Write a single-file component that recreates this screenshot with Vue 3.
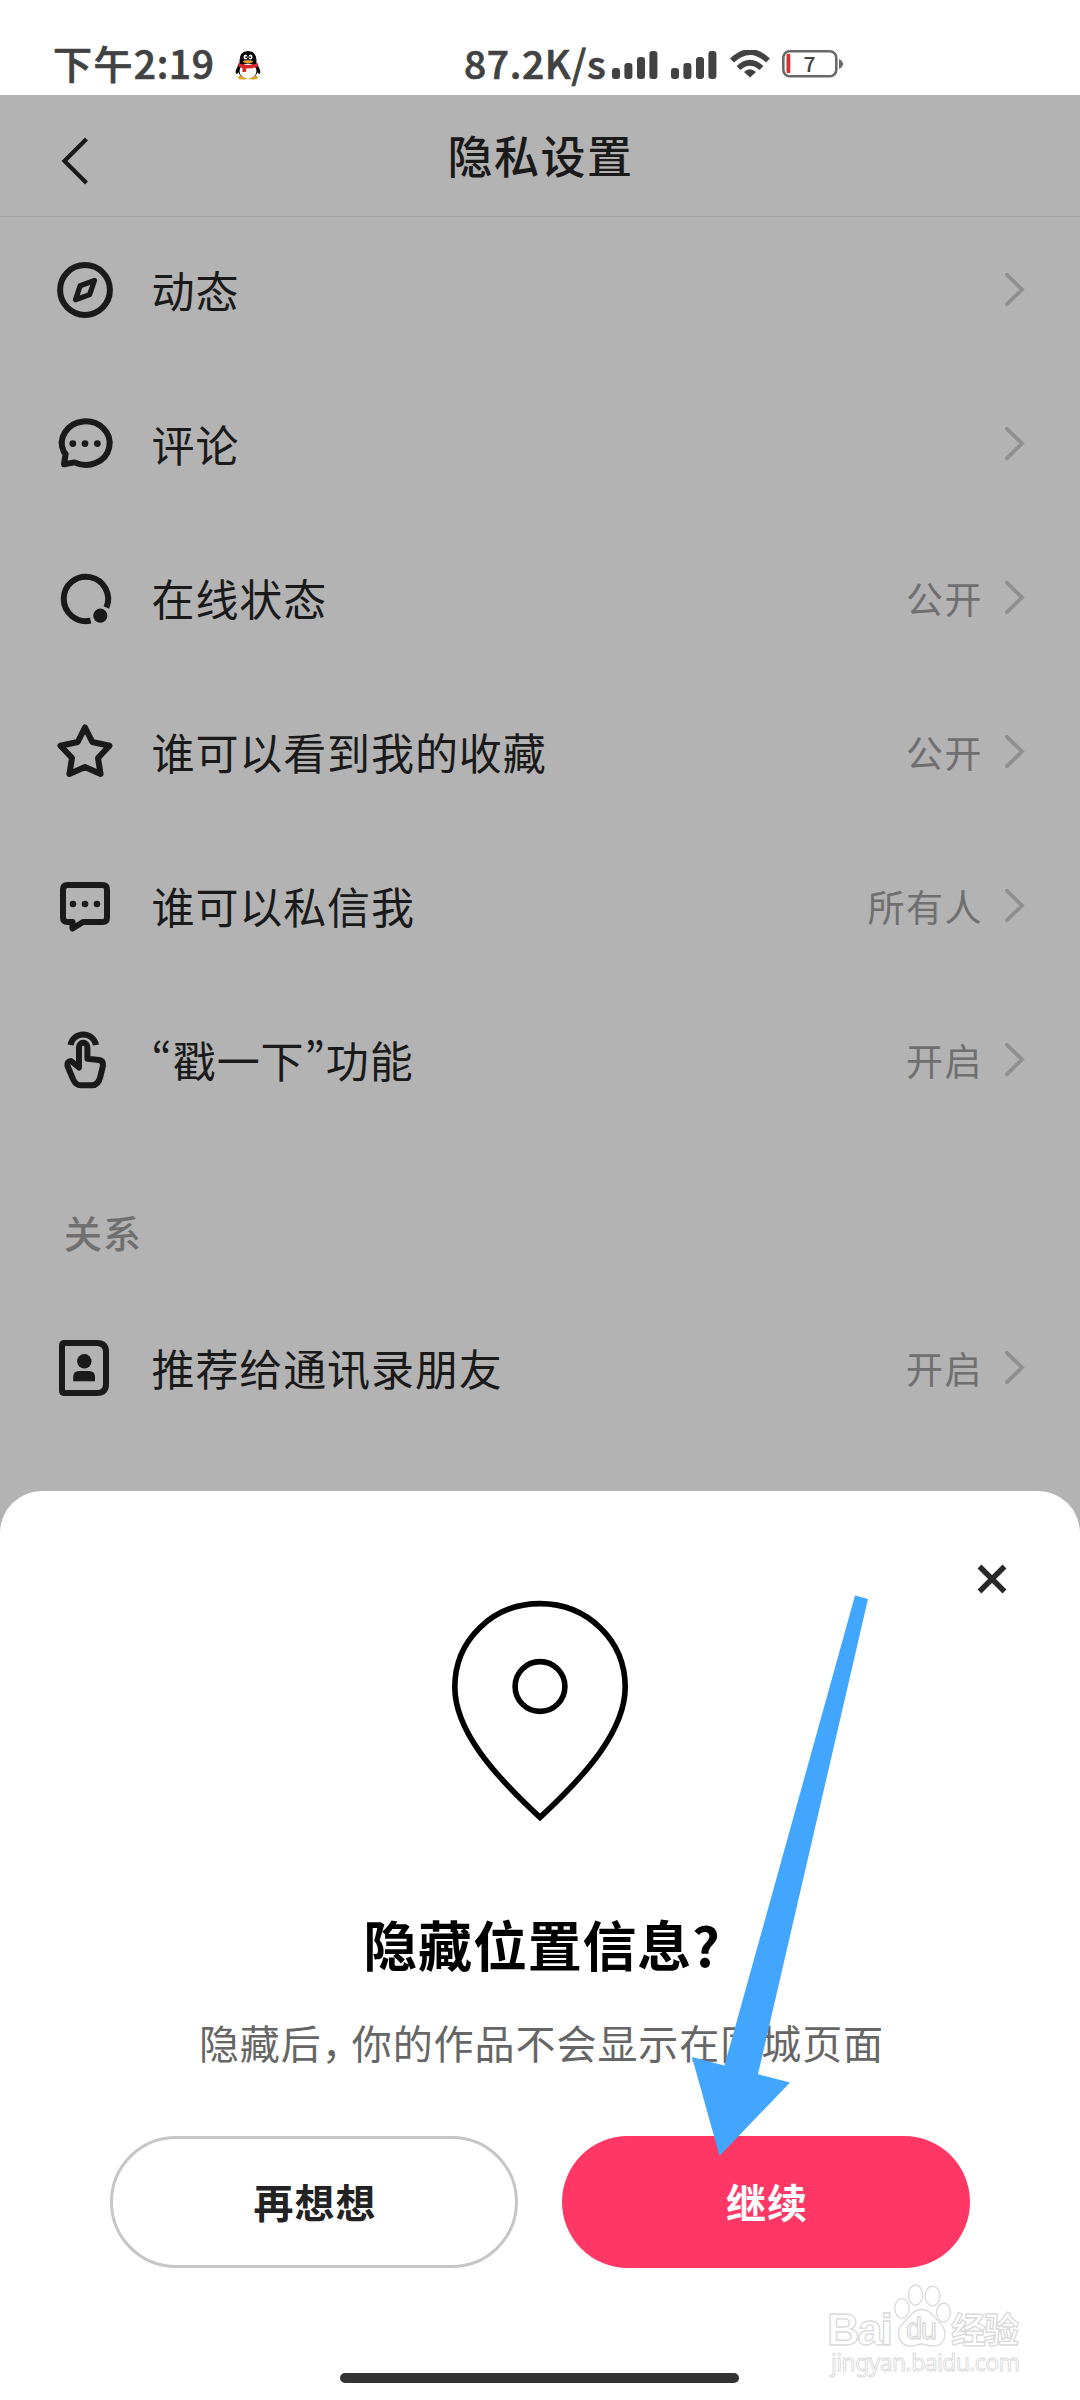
<script setup>
const rows = [
  { icon: 'compass', label: '动态', value: '' },
  { icon: 'comment', label: '评论', value: '' },
  { icon: 'online', label: '在线状态', value: '公开' },
  { icon: 'star', label: '谁可以看到我的收藏', value: '公开' },
  { icon: 'message', label: '谁可以私信我', value: '所有人' },
  { icon: 'poke', label: '“戳一下”功能', value: '开启' },
]
const relationRows = [{ icon: 'contact', label: '推荐给通讯录朋友', value: '开启' }]
const groups = [
  { title: '', items: rows },
  { title: '关系', items: relationRows },
]
</script>

<template>
  <div class="screen">
    <header class="status">
      <span class="time"><span class="cjk">下午</span>2:19</span>
      <svg class="qq" width="26" height="30" viewBox="0 0 26 30">
        <ellipse cx="8" cy="27.5" rx="5" ry="2" fill="#e0a526" />
        <ellipse cx="18" cy="27.5" rx="5" ry="2" fill="#e0a526" />
        <path d="M4 13 L1 20 Q0 24 2 24 L6 20Z M22 13 L25 20 Q26 24 24 24 L20 20Z" fill="#000" />
        <path d="M4.5 13 Q4 1 13 1 Q22 1 21.500 13 L23 20 Q22 28 13 28 Q4 28 3 20Z" fill="#000" />
        <ellipse cx="13" cy="21" rx="8.500" ry="7.500" fill="#fff" />
        <ellipse cx="10.500" cy="7" rx="2" ry="2.600" fill="#fff" />
        <ellipse cx="15.500" cy="7" rx="2" ry="2.600" fill="#fff" />
        <circle cx="11.200" cy="7.200" r="0.900" />
        <circle cx="15" cy="7.200" r="0.900" />
        <ellipse cx="13" cy="11.500" rx="5" ry="1.600" fill="#e8a030" />
        <path d="M3.500 13 Q13 17 22.500 13 L23 16.500 Q17 19 11 18.500 V22 H7.500 V18 L3.500 16.500Z" fill="#d8262a" />
      </svg>
      <span class="speed">87.2K/s</span>
      <svg v-for="n in 2" :key="n" class="signal" width="46" height="30" viewBox="0 0 46 30">
        <g fill="#424242">
          <rect x="0" y="18" width="8" height="11" rx="3" />
          <rect x="12.400" y="13" width="8" height="16" rx="3" />
          <rect x="25" y="7" width="8" height="22" rx="3" />
          <rect x="37.400" y="1" width="8" height="28" rx="3" />
        </g>
      </svg>
      <svg class="wifi" width="40" height="30" viewBox="0 0 40 30">
        <path d="M2 10.500 Q20 -6.500 38 10.500" fill="none" stroke="#424242" stroke-width="5.600" />
        <path d="M8.500 18 Q20 7.500 31.500 18" fill="none" stroke="#424242" stroke-width="5.600" />
        <path d="M14 22 Q20 16.500 26 22 L20 27.500Z" fill="#424242" />
      </svg>
      <svg class="battery" width="62" height="30" viewBox="0 0 62 30">
        <rect x="1.300" y="2.300" width="53" height="25" rx="6.500" fill="none" stroke="#696969" stroke-width="2.600" />
        <rect x="4.500" y="5" width="3.800" height="19" rx="1" fill="#d9302f" />
        <path d="M57 10 Q61 12 61 15 Q61 18 57 20Z" fill="#696969" />
        <text x="27.500" y="23" text-anchor="middle" class="level">7</text>
      </svg>
    </header>

    <main class="page">
      <nav class="navbar">
        <svg class="back" width="30" height="50" viewBox="0 0 30 50">
          <path d="M26.500 3 L4.500 25 L26.500 47" fill="none" stroke="#1a1a1a" stroke-width="4.200" />
        </svg>
        <h1 class="title">隐私设置</h1>
      </nav>

      <section v-for="group in groups" :key="group.title" class="group">
        <h2 v-if="group.title" class="group-title">{{ group.title }}</h2>
        <div v-for="row in group.items" :key="row.label" class="row">
          <svg class="icon" width="60" height="60" viewBox="0 0 60 60">
            <g v-if="row.icon === 'compass'">
              <circle cx="30" cy="30" r="24.900" />
              <path class="mid" d="M39.500 20.500 L25.200 25.700 L20.500 39.700 L34.600 34.600Z" />
            </g>
            <g v-else-if="row.icon === 'comment'">
              <path d="M10.600 40 L8.800 37.800 A23.900 21.800 0 1 1 19.500 48.400 L9 50.300Z" />
              <g class="solid"><circle cx="17.800" cy="29.600" r="3.400" /><circle cx="30" cy="29.600" r="3.400" /><circle cx="42.300" cy="29.600" r="3.400" /></g>
            </g>
            <g v-else-if="row.icon === 'online'">
              <path class="butt" d="M51.400 39.500 A22.200 22.200 0 1 0 35.600 52.600" />
              <circle class="solid" cx="45.300" cy="47.700" r="7.100" />
            </g>
            <path v-else-if="row.icon === 'star'" d="M30 5.500 L37.300 20 L54.500 23.700 L43 36 L45.600 52 L30 45 L14.400 52 L17 36 L5.500 23.700 L22.700 20Z" />
            <g v-else-if="row.icon === 'message'">
              <path d="M12.500 9 H47.500 Q52 9 52 13.500 V41.500 Q52 46 47.500 46 H28 L17.500 52.500 V46 H12.500 Q8 46 8 41.500 V13.500 Q8 9 12.500 9Z" />
              <g class="solid"><circle cx="18" cy="28" r="3.300" /><circle cx="30" cy="28" r="3.300" /><circle cx="42" cy="28" r="3.300" /></g>
            </g>
            <g v-else-if="row.icon === 'poke'">
              <path class="butt" d="M15.500 15 A12.900 12.300 0 0 1 41 15" />
              <path d="M24 37.500 V17 A4.200 4.200 0 0 1 32.400 17 V28.800 L44 30 Q48.500 30.800 48 35.500 L45.500 46 Q43.500 55.300 37 55.300 H26 Q20.500 55.300 18 49 L12.500 36 Q11.500 31.500 16 31Z" />
            </g>
            <g v-else>
              <path d="M9.500 5 H42 Q51 5 51 14 V46 Q51 55 42 55 H9.500 Q7 55 7 52.500 V7.500 Q7 5 9.500 5Z" />
              <g class="solid"><circle cx="29.300" cy="23.300" r="7.200" /><path d="M18.200 43.300 V39 Q18.200 33 24 33 H34 Q40 33 40 39 V43.300Z" /></g>
            </g>
          </svg>
          <span class="label">{{ row.label }}</span>
          <span class="value">{{ row.value }}</span>
          <svg class="chevron" width="22" height="40" viewBox="0 0 22 40">
            <path d="M3 4.800 L18 19.500 L3 34.200" fill="none" stroke="#8f8f8f" stroke-width="3.800" stroke-linecap="round" />
          </svg>
        </div>
      </section>
    </main>

    <div class="sheet-wrap">
      <section class="sheet">
        <div class="sheet-top">
          <svg width="32" height="32" viewBox="0 0 32 32">
            <path d="M3.500 3.500 L28.500 28.500 M28.500 3.500 L3.500 28.500" stroke="#282828" stroke-width="5.400" />
          </svg>
        </div>
        <svg class="pin" width="180" height="224" viewBox="0 0 180 224">
          <g fill="none" stroke="#000" stroke-width="5.600">
            <path d="M90 4.600 C137 4.600 175.200 41 175.200 88 C175.200 131 137 175 90 218.400 C43 175 4.800 131 4.800 88 C4.800 41 43 4.600 90 4.600Z" />
            <circle cx="90" cy="87.500" r="24.900" />
          </g>
        </svg>
        <h2 class="sheet-title">隐藏位置信息?</h2>
        <p class="sheet-text">隐藏后<span class="comma">，</span>你的作品不会显示在同城页面</p>
        <div class="actions">
          <button class="btn ghost">再想想</button>
          <button class="btn primary">继续</button>
        </div>
        <div class="home-bar"></div>
      </section>
    </div>

    <svg class="arrow" width="190" height="580" viewBox="685 1585 190 580">
      <path d="M855 1595.500 L868 1599 L758 2074.300 L790 2082.500 L719.500 2156 L692 2057 L724.500 2065.500Z" fill="#42a6ff" />
    </svg>

    <svg class="watermark" width="210" height="110" viewBox="820 2275 210 110">
      <g fill="#fff" stroke="#dadada" stroke-width="1.300">
        <text x="827" y="2345" textLength="66" class="wm-latin">Bai</text>
        <ellipse cx="902" cy="2308.500" rx="7.300" ry="9.800" />
        <ellipse cx="915.500" cy="2295" rx="7" ry="10" />
        <ellipse cx="932.500" cy="2296" rx="7.500" ry="9.800" />
        <ellipse cx="943.500" cy="2312.500" rx="7" ry="9.500" />
        <path d="M922 2309.500 C931 2309.500 934 2318 939 2322 C948 2330 947 2346 933 2346 C927 2346 926 2344 922 2344 C918 2344 916 2346 911 2346 C897 2346 895 2330 904 2322 C910 2317 913 2309.500 922 2309.500Z" />
        <text x="906" y="2339" textLength="31" class="wm-du">du</text>
        <text x="951" y="2343" textLength="68" class="wm-cjk">经验</text>
        <text x="831" y="2370.500" textLength="189" class="wm-url">jingyan.baidu.com</text>
      </g>
    </svg>
  </div>
</template>

<style>
body {
  margin: 0;
}
</style>

<style scoped>
.screen {
  position: relative;
  display: flex;
  flex-direction: column;
  width: 1080px;
  height: 2400px;
  overflow: hidden;
  background: #fff;
  color: #1a1a1a;
  font-family: "Noto Sans CJK SC", "Noto Sans", sans-serif;
}
h1,
h2,
p {
  margin: 0;
}
svg {
  display: block;
  flex: none;
}
.status {
  display: flex;
  align-items: flex-start;
  box-sizing: border-box;
  height: 95px;
  padding: 50px 0 0 53px;
  color: #424242;
}
.time,
.speed {
  flex: none;
  height: 30px;
  margin-top: -2px;
  font-size: 39px;
  line-height: 29px;
  font-weight: 500;
  letter-spacing: 0.600px;
  white-space: nowrap;
  -webkit-text-stroke: 0.700px #424242;
}
.time {
  width: 182px;
}
.time .cjk {
  letter-spacing: 1.400px;
}
.speed {
  width: 148px;
  margin-left: 203px;
}
.signal + .signal {
  margin-left: 13px;
}
.wifi {
  margin-left: 13px;
}
.battery {
  margin-left: 12px;
  margin-top: -1px;
}
.level {
  font: 500 21px "Noto Sans CJK SC", sans-serif;
  fill: #424242;
}
.page {
  flex: none;
  height: 1396px;
  background: #b3b3b3;
}
.navbar {
  display: flex;
  align-items: center;
  box-sizing: border-box;
  height: 122px;
  padding: 0 60px 1px;
  border-bottom: 1px solid #a3a3a3;
}
.back {
  margin-top: 12px;
}
.title {
  flex: 1;
  padding-right: 29px;
  text-align: center;
  font-size: 45px;
  line-height: 60px;
  font-weight: 500;
  letter-spacing: 1.500px;
}
.group {
  display: flex;
  flex-direction: column;
  gap: 94px;
  padding: 43px 54px 0 55px;
}
.group-title {
  height: 56px;
  margin: 71px 0 -16px 9px;
  color: #6f6f6f;
  font-size: 38px;
  line-height: 56px;
  font-weight: 500;
  letter-spacing: 1px;
}
.row {
  display: flex;
  align-items: center;
  height: 60px;
}
.icon {
  fill: none;
  stroke: #1a1a1a;
  stroke-width: 6;
  stroke-linejoin: round;
  stroke-linecap: round;
}
.mid {
  stroke-width: 5.200;
}
.butt {
  stroke-linecap: butt;
}
.solid {
  fill: #1a1a1a;
  stroke: none;
}
.label {
  flex: 1;
  margin: -2px 0 0 36.500px;
  font-size: 43px;
  line-height: 60px;
  letter-spacing: 0.900px;
  font-feature-settings: "pwid";
}
.value {
  margin-right: 21px;
  color: #6f6f6f;
  font-size: 37px;
  line-height: 60px;
  letter-spacing: 1.500px;
}
.sheet-wrap {
  flex: 1;
  background: #b3b3b3;
}
.sheet {
  display: flex;
  flex-direction: column;
  align-items: center;
  box-sizing: border-box;
  height: 909px;
  border-radius: 42px 42px 0 0;
  background: #fff;
}
.sheet-top {
  display: flex;
  justify-content: flex-end;
  box-sizing: border-box;
  width: 100%;
  height: 108px;
  padding: 72px 72px 0 0;
}
.sheet-title {
  height: 80px;
  margin-top: 81px;
  padding-left: 4px;
  color: #000;
  font-size: 54px;
  line-height: 80px;
  font-weight: 700;
  letter-spacing: 0.800px;
}
.sheet-text {
  height: 60px;
  margin-top: 28px;
  padding-left: 3px;
  color: #666;
  font-size: 40px;
  line-height: 60px;
  letter-spacing: 0.950px;
  white-space: nowrap;
}
.comma {
  margin: 0 9px 0 0;
  font-feature-settings: "halt";
}
.actions {
  display: flex;
  gap: 44px;
  margin-top: 64px;
}
.btn {
  box-sizing: border-box;
  width: 408px;
  height: 132px;
  padding: 0 0 3px 2px;
  border: 0;
  border-radius: 66px;
  font-family: inherit;
  font-size: 40px;
  font-weight: 700;
  letter-spacing: 1px;
}
.ghost {
  border: 3px solid #c6c6c6;
  background: #fff;
  color: #222;
}
.primary {
  background: #ff3765;
  color: #fff;
}
.home-bar {
  width: 399px;
  height: 10px;
  margin: 105px 1px 0 0;
  border-radius: 5px;
  background: #333;
}
.arrow {
  position: absolute;
  left: 685px;
  top: 1585px;
}
.watermark {
  position: absolute;
  left: 820px;
  top: 2275px;
}
.wm-latin {
  font: 700 45px "Liberation Sans", sans-serif;
}
.wm-du {
  font: 400 29px "Liberation Sans", sans-serif;
}
.wm-cjk {
  font: 700 35px "Noto Sans CJK SC", sans-serif;
}
.wm-url {
  font: 400 23px "Noto Sans", sans-serif;
  stroke-width: 0.900;
}
</style>
